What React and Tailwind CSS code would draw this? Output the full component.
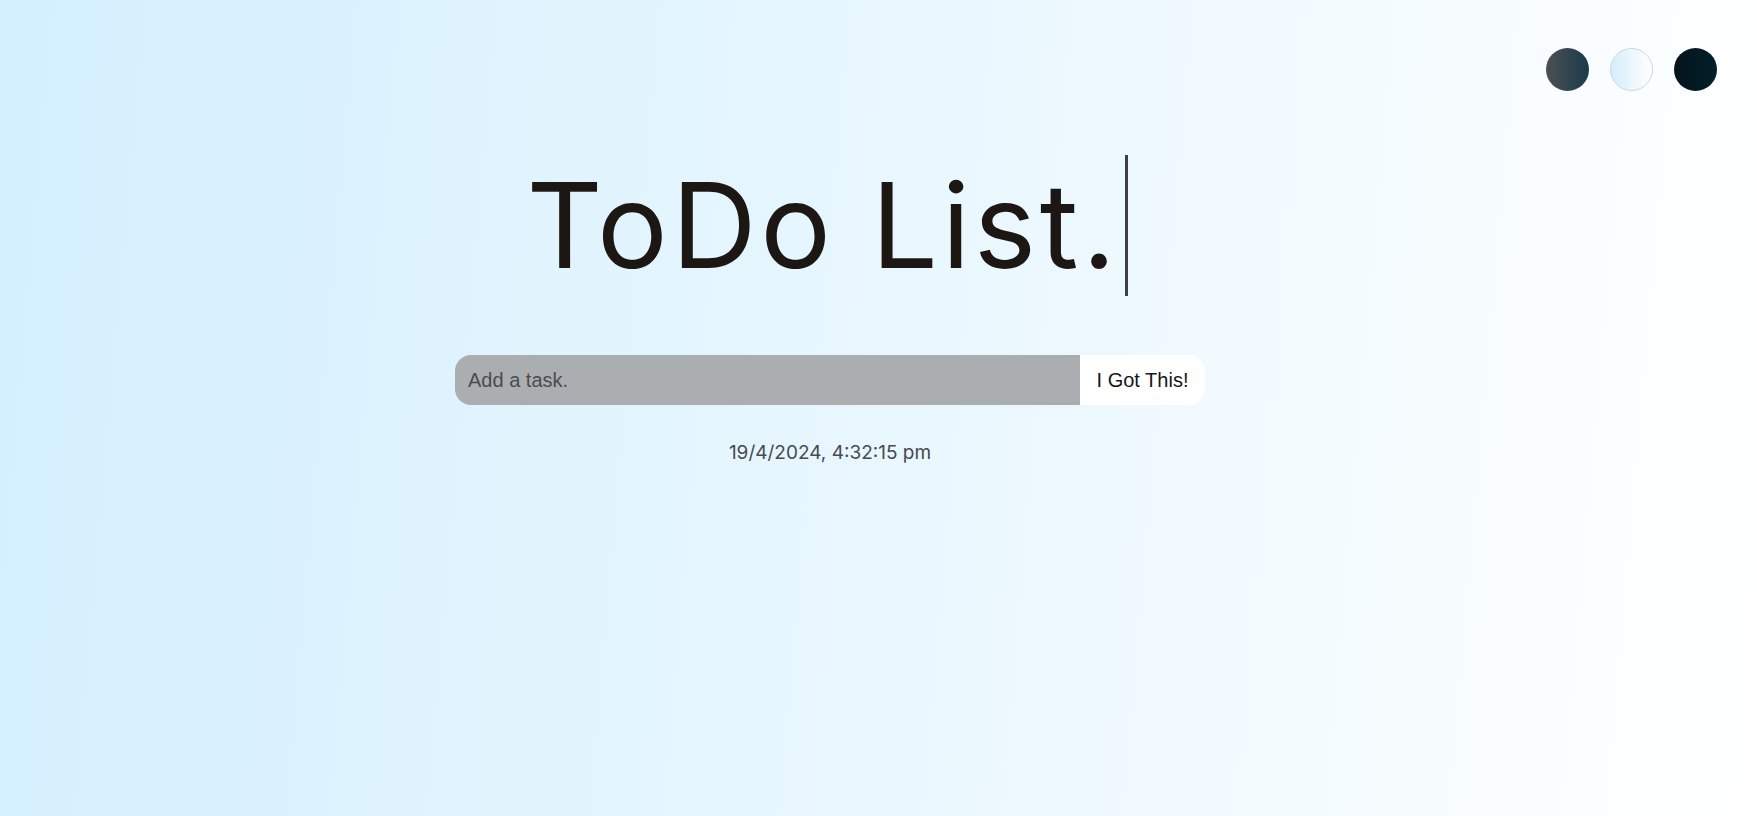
import { useState } from 'react'

const themes = [
  { id: 'standard', cls: 'bg-[linear-gradient(90deg,#4b5054,#1c3a4a)]' },
  { id: 'light', cls: 'bg-[linear-gradient(90deg,#d5eefb,#ffffff)] border border-[#cfd6da]' },
  { id: 'darker', cls: 'bg-[linear-gradient(90deg,#06141b,#01202b)]' },
]

export default function App() {
  const [task, setTask] = useState('')
  const [theme, setTheme] = useState('light')

  return (
    <div className="min-h-screen w-full flex flex-col bg-[linear-gradient(95deg,#d3effe_0%,#e6f6fe_45%,#ffffff_100%)]">
      {/* theme selector */}
      <div className="flex justify-end gap-[21px] pt-[48px] pr-[40px]">
        {themes.map(t => (
          <button
            key={t.id}
            onClick={() => setTheme(t.id)}
            className={`w-[43px] h-[43px] rounded-full ${t.cls}`}
            aria-label={t.id}
          />
        ))}
      </div>

      {/* main */}
      <div className="flex flex-col items-center pr-[97px]">
        <div className="flex items-center mt-[64px] pr-[6px]">
          <h1
            className="text-[118px] leading-[141px] tracking-[3.6px] text-[#1c1713] font-normal"
            style={{ fontFamily: 'Inter, "Noto Sans", sans-serif' }}
          >
            ToDo List.
          </h1>
          <span className="w-[3px] h-[141px] bg-[#3b4046] ml-[5px]" />
        </div>

        <form
          onSubmit={e => { e.preventDefault(); setTask('') }}
          className="flex mt-[59px] w-[750px] h-[50px]"
          style={{ fontFamily: '"Liberation Sans", Arial, sans-serif' }}
        >
          <input
            value={task}
            onChange={e => setTask(e.target.value)}
            placeholder="Add a task."
            className="flex-1 h-full bg-[#abaeb0] rounded-l-[16px] pl-[13px] text-[20px] text-[#222] placeholder:text-[#4a4c4e] outline-none"
          />
          <button
            type="submit"
            className="w-[125px] h-full bg-white rounded-r-[16px] text-[20px] text-[#161616]"
          >
            I Got This!
          </button>
        </form>

        <p
          className="mt-[34px] text-[19px] leading-[28px] text-[#474a4d]"
          style={{ fontFamily: 'Inter, "Noto Sans", sans-serif' }}
        >
          19/4/2024, 4:32:15 pm
        </p>
      </div>
    </div>
  )
}
